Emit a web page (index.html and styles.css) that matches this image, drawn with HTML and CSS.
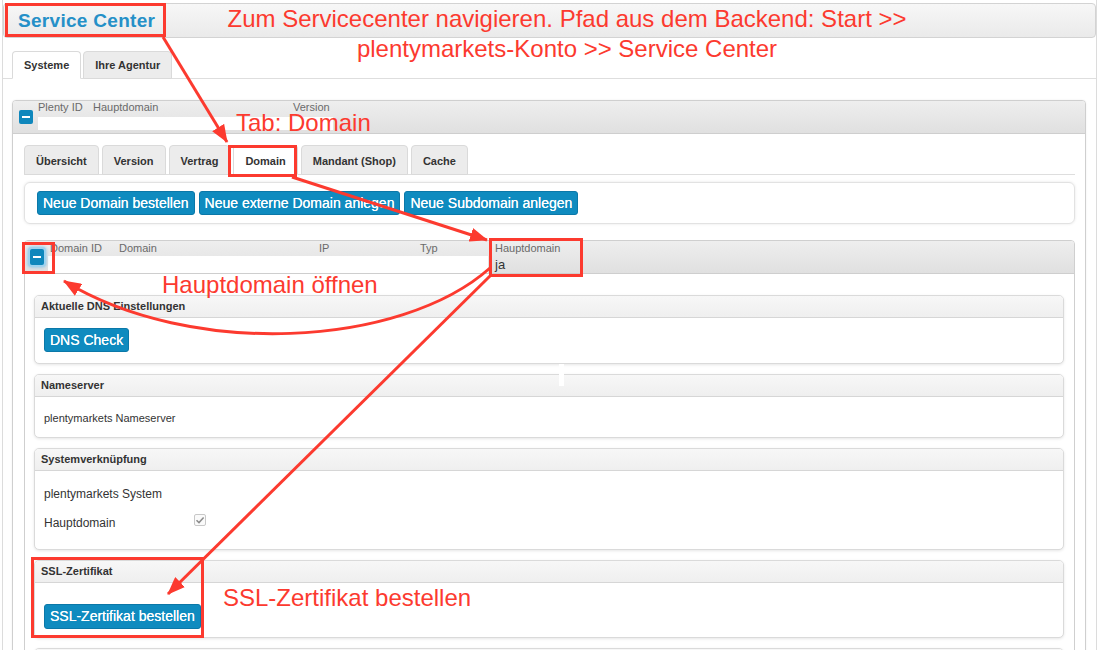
FILE: index.html
```html
<!DOCTYPE html>
<html lang="de">
<head>
<meta charset="utf-8">
<title>Service Center</title>
<link rel="stylesheet" href="styles.css">
</head>
<body>
<div class="page">
  <div class="topbar"><span class="title">Service Center</span></div>
  <div class="toptabs">
    <div class="tab active">Systeme</div>
    <div class="tab">Ihre Agentur</div>
  </div>
  <div class="content">
    <div class="panel sys-panel">
      <div class="panel-head sys-head">
        <span class="minus"></span>
        <div class="head-cols">
          <div class="head-labels">
            <span class="c-id">Plenty ID</span><span class="c-main">Hauptdomain</span><span>Version</span>
          </div>
          <div class="valuebar sys-bar"></div>
        </div>
      </div>
      <div class="panel-body sys-body">
        <div class="innertabs">
          <div class="tab">Übersicht</div>
          <div class="tab">Version</div>
          <div class="tab">Vertrag</div>
          <div class="tab active">Domain</div>
          <div class="tab">Mandant (Shop)</div>
          <div class="tab">Cache</div>
        </div>
        <div class="actions">
          <span class="btn">Neue Domain bestellen</span>
          <span class="btn">Neue externe Domain anlegen</span>
          <span class="btn">Neue Subdomain anlegen</span>
        </div>
        <div class="panel dom-panel">
          <div class="panel-head dom-head">
            <span class="minus focus"></span>
            <div class="head-cols">
              <div class="head-labels dom-labels">
                <span class="d-id">Domain ID</span><span class="d-dom">Domain</span><span class="d-ip">IP</span><span class="d-typ">Typ</span><span>Hauptdomain</span>
              </div>
              <div class="dom-values">
                <div class="valuebar dom-bar"></div>
                <span class="ja">ja</span>
              </div>
            </div>
          </div>
          <div class="panel-body dom-body">
            <div class="card">
              <div class="card-head">Aktuelle DNS Einstellungen</div>
              <div class="card-body dns-body"><span class="btn">DNS Check</span></div>
            </div>
            <div class="card">
              <div class="card-head">Nameserver</div>
              <div class="card-body ns-body">plentymarkets Nameserver</div>
            </div>
            <div class="card">
              <div class="card-head">Systemverknüpfung</div>
              <div class="card-body sys-link">
                <div class="row">plentymarkets System</div>
                <div class="row row2"><span class="row-label">Hauptdomain</span><span class="checkbox"><svg width="10" height="10" viewBox="0 0 10 10"><path d="M1.5 5.2 L4 7.6 L8.6 2.4" fill="none" stroke="#8c8c8c" stroke-width="1.5"/></svg></span></div>
              </div>
            </div>
            <div class="card">
              <div class="card-head">SSL-Zertifikat</div>
              <div class="card-body ssl-body"><span class="btn">SSL-Zertifikat bestellen</span></div>
            </div>
            <div class="card">
              <div class="card-head"></div>
              <div class="card-body"></div>
            </div>
          </div>
        </div>
      </div>
    </div>
  </div>
</div>

<div class="glitch"></div>

<svg class="annot" width="1099" height="650" viewBox="0 0 1099 650">
  <defs>
    <marker id="ah" viewBox="0 0 18 14" refX="17" refY="7" markerWidth="18" markerHeight="14" markerUnits="userSpaceOnUse" orient="auto">
      <path d="M0,0 L18,7 L0,14 z" fill="#fc3a2f"/>
    </marker>
  </defs>
  <g fill="none" stroke="#fc3a2f" stroke-width="3">
    <rect x="6.5" y="4.5" width="158" height="31"/>
    <rect x="229.5" y="146.5" width="66" height="29"/>
    <rect x="23.5" y="243.5" width="30" height="29"/>
    <rect x="490.5" y="239.5" width="91" height="36"/>
    <rect x="32.5" y="558.5" width="170" height="78"/>
    <line x1="163" y1="37" x2="227" y2="142" marker-end="url(#ah)"/>
    <line x1="292" y1="177" x2="487" y2="240" marker-end="url(#ah)"/>
    <path d="M490 268 C 400 348, 190 358, 64 281" marker-end="url(#ah)"/>
    <line x1="490" y1="276" x2="168" y2="594" marker-end="url(#ah)"/>
  </g>
</svg>

<div class="note note-top">Zum Servicecenter navigieren. Pfad aus dem Backend: Start &gt;&gt;<br>plentymarkets-Konto &gt;&gt; Service Center</div>
<div class="note note-tab">Tab: Domain</div>
<div class="note note-open">Hauptdomain öffnen</div>
<div class="note note-ssl">SSL-Zertifikat bestellen</div>
</body>
</html>
```

FILE: styles.css
```css
* { box-sizing: border-box; }
html, body {
  margin: 0;
  height: 650px;
  overflow: hidden;
  background: #fff;
  font-family: "Liberation Sans", Arial, sans-serif;
  color: #333;
}
body { position: relative; }

.page {
  margin: 0 2px;
  height: 650px;
  border-left: 1px solid #dcdcdc;
  border-right: 1px solid #dcdcdc;
  overflow: hidden;
}

.topbar {
  margin-top: 3px;
  height: 35px;
  border: 1px solid #d3d3d3;
  border-radius: 4px;
  background: linear-gradient(#f7f7f7, #eaeaea);
  display: flex;
  align-items: center;
  padding-left: 14px;
}
.title {
  font-weight: bold;
  font-size: 19px;
  letter-spacing: 0.3px;
  color: #2590c8;
}

.toptabs {
  display: flex;
  align-items: flex-start;
  gap: 2px;
  height: 41px;
  padding: 13px 0 0 9px;
  border-bottom: 1px solid #dedede;
}
.tab {
  height: 28px;
  margin-bottom: -1px;
  padding: 0 12px;
  border: 1px solid #dadada;
  border-radius: 4px 4px 0 0;
  background: #ececec;
  font-size: 11px;
  font-weight: bold;
  line-height: 26px;
  color: #333;
  white-space: nowrap;
}
.toptabs .tab { padding: 0 11px; }
.tab.active {
  background: #fff;
  border-bottom-color: #fff;
}

.content {
  padding: 21px 10px 0 9px;
}

.panel {
  border: 1px solid #cfcfcf;
  border-radius: 4px 4px 0 0;
  background: #fff;
}
.sys-panel {
  height: 560px;
  box-shadow: 0 0 2px rgba(0,0,0,0.08);
}
.panel-head {
  display: flex;
  align-items: flex-start;
  background: linear-gradient(#eeeeee, #e0e0e0);
  border-bottom: 1px solid #cecece;
  border-radius: 3px 3px 0 0;
}
.sys-head { height: 33px; }
.dom-head { height: 33px; }

.minus {
  position: relative;
  flex: none;
  width: 14px;
  height: 14px;
  margin: 9px 0 0 6px;
  background: #0f87bc;
  border-radius: 2px;
}
.minus::after {
  content: "";
  position: absolute;
  left: 3px;
  right: 3px;
  top: 6px;
  height: 2px;
  background: #fff;
}
.minus.focus {
  width: 14px;
  height: 16px;
  margin: 8px 0 0 5px;
  box-shadow: 0 0 0 2px #9fd3ef, 0 0 3px 3px rgba(120,190,230,0.6);
}
.minus.focus::after { top: 7px; }

.head-cols {
  display: flex;
  flex-direction: column;
  margin-left: 5px;
}
.head-labels {
  display: flex;
  align-items: center;
  height: 13px;
  font-size: 11px;
  line-height: 11px;
  color: #6a6a6a;
  white-space: nowrap;
}
.c-id { width: 55px; }
.c-main { width: 200px; }
.valuebar {
  height: 13px;
  background: #fff;
}
.sys-bar {
  width: 295px;
  margin-top: 3px;
}

.sys-body {
  padding: 11px 10px 0 11px;
}
.innertabs {
  display: flex;
  align-items: flex-start;
  gap: 3px;
  height: 30px;
  border-bottom: 1px solid #dedede;
}
.innertabs .tab {
  height: 30px;
  padding: 0 11px;
  line-height: 30px;
}

.actions {
  display: flex;
  gap: 4px;
  height: 42px;
  margin-top: 7px;
  padding: 8px 12px;
  border: 1px solid #e2e2e2;
  border-radius: 6px;
  box-shadow: 0 0 3px rgba(0,0,0,0.1);
}
.btn {
  display: inline-block;
  height: 24px;
  padding: 0 5px;
  border: 1px solid #0b78a8;
  border-radius: 3px;
  background: #0f8bbf;
  color: #fff;
  font-size: 14px;
  line-height: 22px;
  white-space: nowrap;
  text-shadow: 0 0 0.5px #fff;
}

.dom-panel {
  margin-top: 16px;
  height: 420px;
}
.dom-head .head-cols { margin-left: 6px; }
.dom-labels { margin-top: 1px; }
.d-id { width: 69px; }
.d-dom { width: 200px; }
.d-ip { width: 101px; }
.d-typ { width: 75px; }
.dom-values {
  display: flex;
  align-items: center;
  height: 17px;
  margin-top: 1px;
}
.dom-bar {
  width: 440px;
  height: 17px;
  margin-left: -2px;
}
.ja {
  margin-left: 7px;
  font-size: 13px;
  color: #333;
}

.dom-body {
  padding: 21px 10px 0 9px;
}
.card {
  margin-bottom: 10px;
  border: 1px solid #dadada;
  border-radius: 5px;
  background: #fff;
  box-shadow: 0 1px 3px rgba(0,0,0,0.1);
  overflow: hidden;
}
.card-head {
  height: 22px;
  padding-left: 6px;
  background: linear-gradient(#f7f7f7, #efefef);
  border-bottom: 1px solid #d6d6d6;
  font-size: 11px;
  font-weight: bold;
  line-height: 21px;
  color: #333;
}
.card-body {
  padding: 0 9px;
  font-size: 11px;
  color: #333;
}
.dns-body { padding-top: 10px; padding-bottom: 11px; }
.dns-body .btn { padding: 0 5px; }
.ns-body { padding-top: 15px; padding-bottom: 13px; line-height: 12px; }
.sys-link { padding-top: 16px; padding-bottom: 19px; font-size: 12px; }
.row { display: flex; align-items: center; height: 14px; }
.row2 { margin-top: 15px; }
.row-label { width: 150px; }
.checkbox {
  display: flex;
  align-items: center;
  justify-content: center;
  width: 12px;
  height: 12px;
  margin-top: -7px;
  border: 1px solid #c8c8c8;
  border-radius: 2px;
  background: #fafafa;
}
.ssl-body { padding-top: 21px; padding-bottom: 8px; }
.ssl-body .btn { height: 25px; line-height: 23px; }

.glitch {
  position: absolute;
  left: 559px;
  top: 364px;
  width: 5px;
  height: 22px;
  background: #fff;
}

.annot {
  position: absolute;
  left: 0;
  top: 0;
  pointer-events: none;
}
.note {
  position: absolute;
  font-size: 24px;
  line-height: 28px;
  color: #fc3a2f;
  white-space: nowrap;
}
.note-top {
  left: 167px;
  top: 4px;
  width: 800px;
  line-height: 30px;
  text-align: center;
}
.note-tab { left: 236px; top: 115px; line-height: 16px; }
.note-open { left: 162px; top: 271px; }
.note-ssl { left: 223px; top: 584px; }
```
